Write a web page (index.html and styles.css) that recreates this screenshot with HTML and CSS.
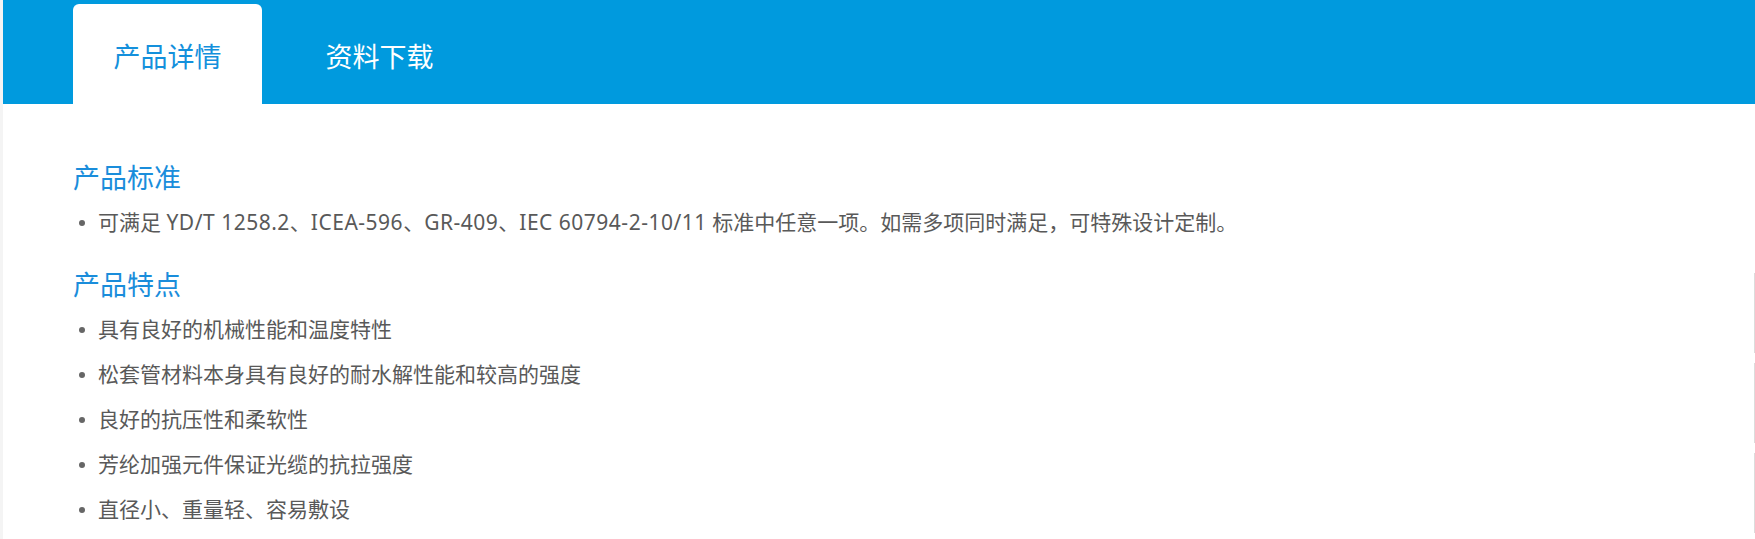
FILE: index.html
```html
<!DOCTYPE html>
<html lang="zh-CN">
<head>
    <meta charset="UTF-8">
    <title>产品详情</title>
    <link rel="stylesheet" href="styles.css">
</head>
<body>

<div class="page">
    <div class="tabs">
        <div class="tab active">产品详情</div>
        <div class="tab">资料下载</div>
    </div>

    <div class="detail">
        <h3 class="sec-title">产品标准</h3>
        <ul class="points">
            <li><span>可满足 <span class="latin">YD/T 1258.2</span>、<span class="latin">ICEA-596</span>、<span class="latin">GR-409</span>、<span class="latin">IEC 60794-2-10/11</span> 标准中任意一项。如需多项同时满足，可特殊设计定制。</span></li>
        </ul>

        <h3 class="sec-title second">产品特点</h3>
        <ul class="points">
            <li>具有良好的机械性能和温度特性</li>
            <li>松套管材料本身具有良好的耐水解性能和较高的强度</li>
            <li>良好的抗压性和柔软性</li>
            <li>芳纶加强元件保证光缆的抗拉强度</li>
            <li>直径小、重量轻、容易敷设</li>
        </ul>
    </div>
</div>

<div class="side-tools">
    <span></span>
    <span></span>
    <span></span>
</div>

</body>
</html>
```

FILE: styles.css
```css
body {
    margin: 0;
    background-color: #f4f4f4;
    font-family: "Noto Sans", "Noto Sans CJK SC", sans-serif;
}
.page {
    margin-left: 3px;
    min-height: 539px;
    background-color: #fff;
}
.tabs {
    display: flex;
    align-items: flex-end;
    gap: 23px;
    height: 104px;
    padding-left: 70px;
    background-color: #009ade;
}
.tab {
    display: flex;
    justify-content: center;
    align-items: center;
    width: 189px;
    height: 100px;
    padding-top: 3px;
    box-sizing: border-box;
    border-radius: 6px 6px 0 0;
    font-size: 27px;
    color: #fff;
}
.tab.active {
    background-color: #fff;
    color: #1490dc;
}
.detail {
    padding: 56px 70px 0;
}
.sec-title {
    margin: 0 0 4px;
    font-size: 27px;
    line-height: 36px;
    font-weight: normal;
    color: #1a8ddb;
}
.sec-title.second {
    margin-top: 22px;
}
.points {
    margin: 0;
    padding: 0;
    list-style: none;
}
.points li {
    display: flex;
    align-items: center;
    gap: 13px;
    padding-left: 6px;
    font-size: 21px;
    line-height: 45px;
    color: #595959;
}
.points li::before {
    content: "";
    flex: none;
    width: 6px;
    height: 6px;
    border-radius: 50%;
    background-color: #666;
}
.latin {
    letter-spacing: 0.5px;
}
.side-tools {
    position: fixed;
    top: 273px;
    right: 0;
    display: flex;
    flex-direction: column;
    gap: 10px;
}
.side-tools span {
    width: 1px;
    height: 80px;
    background-color: #dcdcdc;
}
```
